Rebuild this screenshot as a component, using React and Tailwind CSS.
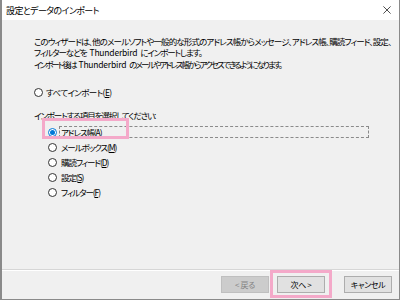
export default function App() {
  const items = [
    { label: 'アドレス帳', key: 'A', checked: true },
    { label: 'メールボックス', key: 'M' },
    { label: '購読フィード', key: 'D' },
    { label: '設定', key: 'S' },
    { label: 'フィルター', key: 'F' },
  ]

  const tb = <span className="tracking-[-0.2px] mx-[3px]">Thunderbird</span>

  return (
    <div
      className="w-[400px] h-[300px] bg-[#f0f0f0] border-l-2 border-r border-b border-[#8a8a8a] flex flex-col overflow-hidden text-black text-[8.5px] leading-[11px] tracking-[-1.1px]"
      style={{ fontFamily: '"Noto Sans CJK JP", "Noto Sans", sans-serif', fontFeatureSettings: '"palt"' }}
    >
      {/* title bar */}
      <div className="h-[20px] bg-white flex items-center justify-between pl-[4px] pr-[8px] shrink-0">
        <span className="text-[9px] tracking-[-0.6px]">設定とデータのインポート</span>
        <svg width="8" height="8" viewBox="0 0 10 10" stroke="#222" strokeWidth="1">
          <path d="M0.5 0.5L9.5 9.5M9.5 0.5L0.5 9.5" />
        </svg>
      </div>

      <div className="flex-1 pl-[32px] pt-[16px]">
        <p className="whitespace-nowrap tracking-[-0.86px]">このウィザードは、他のメールソフトや一般的な形式のアドレス帳からメッセージ、アドレス帳、購読フィード、設定、</p>
        <p className="whitespace-nowrap tracking-[-1.1px]">フィルターなどを{tb}にインポートします。</p>
        <p className="whitespace-nowrap tracking-[-1.95px] mt-[1px]">インポート後は{tb}のメールやアドレス帳からアクセスできるようになります。</p>

        <label className="flex items-center gap-[3px] mt-[17px] tracking-[-0.6px]">
          <Radio />
          <span>すべてインポート(<u>E</u>)</span>
        </label>

        <p className="mt-[12px] tracking-[-1.1px]">インポートする項目を選択してください:</p>

        <div className="pl-[14px] mt-[5px] flex flex-col gap-[4px]">
          {items.map(item => (
            <label key={item.key} className="flex items-center gap-[2px] relative">
              <Radio checked={item.checked} />
              {item.checked ? (
                <span className="w-[310px] border border-dashed border-[#8a8a8a] px-[1px] leading-[10px]">
                  {item.label}(<u>{item.key}</u>)
                </span>
              ) : (
                <span className="pl-[2px]">{item.label}(<u>{item.key}</u>)</span>
              )}
              {item.checked && (
                <span className="absolute left-[-6px] top-[-8px] w-[87px] h-[21px] border-[3px] border-[#f4a9c9]" />
              )}
            </label>
          ))}
        </div>
      </div>

      {/* footer */}
      <div className="h-[30px] border-t border-[#d6d6d6] shadow-[inset_0_1px_0_#ffffff] flex items-center justify-end gap-[8px] pr-[7px] shrink-0 tracking-[-0.4px]">
        <button disabled className="w-[48px] h-[17px] bg-[#cccccc] border border-[#bfbfbf] text-[#838383] text-[8px]">&lt; 戻る</button>
        <div className="relative">
          <button className="w-[48px] h-[17px] bg-[#e1e1e1] border border-[#adadad] text-[8px]">次へ &gt;</button>
          <span className="absolute left-[-7px] top-[-6px] w-[62px] h-[28px] border-[3px] border-[#f4a9c9]" />
        </div>
        <button className="w-[48px] h-[17px] bg-[#e1e1e1] border border-[#adadad] text-[8px] ml-[11px]">キャンセル</button>
      </div>
    </div>
  )
}

function Radio({ checked }) {
  return (
    <span className={`w-[9px] h-[9px] rounded-full border bg-white flex items-center justify-center shrink-0 ${checked ? 'border-[#0078d7]' : 'border-[#333333]'}`}>
      {checked && <span className="w-[5px] h-[5px] rounded-full bg-[#0078d7]" />}
    </span>
  )
}
